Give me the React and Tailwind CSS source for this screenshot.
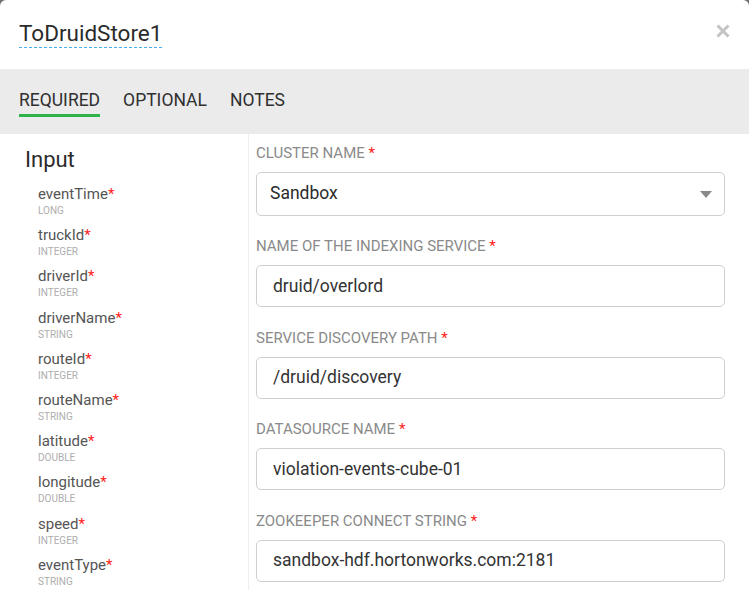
import { useState } from 'react';

const FIELDS = [
  { name: 'eventTime', type: 'LONG' },
  { name: 'truckId', type: 'INTEGER' },
  { name: 'driverId', type: 'INTEGER' },
  { name: 'driverName', type: 'STRING' },
  { name: 'routeId', type: 'INTEGER' },
  { name: 'routeName', type: 'STRING' },
  { name: 'latitude', type: 'DOUBLE' },
  { name: 'longitude', type: 'DOUBLE' },
  { name: 'speed', type: 'INTEGER' },
  { name: 'eventType', type: 'STRING' },
];

const CONFIG = [
  { label: 'NAME OF THE INDEXING SERVICE', value: 'druid/overlord' },
  { label: 'SERVICE DISCOVERY PATH', value: '/druid/discovery' },
  { label: 'DATASOURCE NAME', value: 'violation-events-cube-01' },
  { label: 'ZOOKEEPER CONNECT STRING', value: 'sandbox-hdf.hortonworks.com:2181' },
];

function Label({ children }) {
  return (
    <p className="text-[15px] leading-[18px] text-[#8a8a8a] mb-[10px]">
      {children} <span className="text-[#ff1a1a]">*</span>
    </p>
  );
}

export default function App() {
  const [tab, setTab] = useState('REQUIRED');

  return (
    <div className="bg-[#6f6f6f] w-[749px] h-[590px] overflow-hidden font-['Roboto',sans-serif]">
      <div className="bg-white rounded-t-[6px] h-full flex flex-col">
        {/* header */}
        <div className="h-[69px] flex items-start justify-between px-[19px] pt-[19px] shrink-0">
          <h1 className="text-[22.5px] leading-[28px] text-[#2b2b2b] border-b border-dashed border-[#45b0ee]">
            ToDruidStore1
          </h1>
          <button className="mt-[5px] text-[#c4c4c4]">
            <svg width="14" height="14" viewBox="0 0 14 14">
              <path d="M1.5 1.5 L12.5 12.5 M12.5 1.5 L1.5 12.5" stroke="#c4c4c4" strokeWidth="3" />
            </svg>
          </button>
        </div>

        {/* tabs */}
        <div className="h-[65px] bg-[#ebebeb] flex items-start gap-[23px] px-[19px] pt-[21px] shrink-0">
          {['REQUIRED', 'OPTIONAL', 'NOTES'].map(t => (
            <button
              key={t}
              onClick={() => setTab(t)}
              className={`text-[17.5px] leading-[21px] text-[#2f2f2f] pb-[3px] border-b-[3px] ${
                tab === t ? 'border-[#2db34a]' : 'border-transparent'
              }`}
            >
              {t}
            </button>
          ))}
        </div>

        {/* body */}
        <div className="flex flex-1 min-h-0">
          <div className="w-[249px] shrink-0 border-r border-[#eeeeee] pt-[12px]">
            <h2 className="pl-[25px] text-[22px] leading-[28px] text-[#2b2b2b] mb-[11px]">Input</h2>
            <ul className="pl-[38px]">
              {FIELDS.map(f => (
                <li key={f.name} className="h-[41.2px]">
                  <p className="text-[15px] leading-[18px] text-[#555]">
                    {f.name}<span className="text-[#ff1a1a]">*</span>
                  </p>
                  <p className="text-[10px] leading-[14px] text-[#adadad] mt-[1px]">{f.type}</p>
                </li>
              ))}
            </ul>
          </div>

          <div className="flex-1 pl-[7px] pr-[24px] pt-[10px]">
            <div className="mb-[21px]">
              <Label>CLUSTER NAME</Label>
              <div className="h-[44px] border border-[#cfcfcf] rounded-[5px] flex items-center justify-between pl-[13px] pr-[12px]">
                <span className="text-[17.5px] text-[#2b2b2b] mt-[-2px]">Sandbox</span>
                <svg width="12" height="7" viewBox="0 0 12 7">
                  <path d="M0 0 L12 0 L6 7 Z" fill="#8a8a8a" />
                </svg>
              </div>
            </div>
            {CONFIG.map(c => (
              <div key={c.label} className="mb-[21.5px]">
                <Label>{c.label}</Label>
                <div className="h-[42px] border border-[#cfcfcf] rounded-[5px] flex items-center pl-[16px]">
                  <span className="text-[17.5px] text-[#333]">{c.value}</span>
                </div>
              </div>
            ))}
          </div>
        </div>
      </div>
    </div>
  );
}
